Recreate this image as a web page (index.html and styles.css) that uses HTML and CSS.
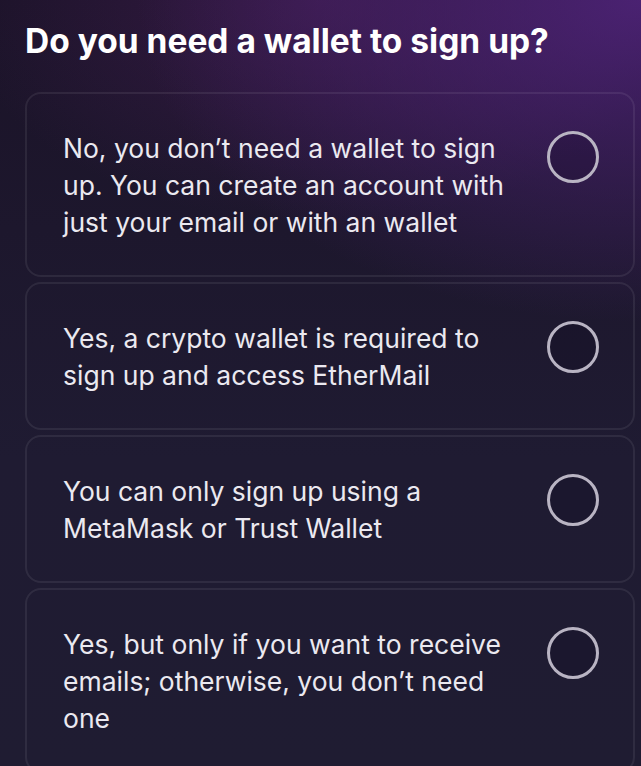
FILE: index.html
```html
<!DOCTYPE html>
<html lang="en">
<head>
<meta charset="utf-8">
<link rel="stylesheet" href="styles.css">
</head>
<body>
<main class="quiz">
  <h1 class="question">Do you need a wallet to sign up?</h1>
  <div class="options">
    <label class="option">
      <span class="option-text">No, you don’t need a wallet to sign up. You can create an account with just your email or with an wallet</span>
      <span class="radio"></span>
    </label>
    <label class="option">
      <span class="option-text">Yes, a crypto wallet is required to sign up and access EtherMail</span>
      <span class="radio"></span>
    </label>
    <label class="option">
      <span class="option-text">You can only sign up using a MetaMask or Trust Wallet</span>
      <span class="radio"></span>
    </label>
    <label class="option">
      <span class="option-text">Yes, but only if you want to receive emails; otherwise, you don’t need one</span>
      <span class="radio"></span>
    </label>
  </div>
</main>
</body>
</html>
```
FILE: styles.css
```css
html, body {
  margin: 0;
  padding: 0;
}
body {
  width: 641px;
  height: 766px;
  overflow: hidden;
  font-family: Inter, "Noto Sans", sans-serif;
  color: #ebe9f0;
  background:
    radial-gradient(ellipse 720px 460px at 100% 0%, rgba(82, 36, 126, 0.85), rgba(82, 36, 126, 0) 70%),
    radial-gradient(ellipse 520px 320px at 50% 0%, rgba(72, 30, 88, 0.6), rgba(72, 30, 88, 0) 70%),
    linear-gradient(180deg, #1b1328 0%, #1f1b32 60%, #1f1c32 100%);
}
.quiz {
  padding: 20px 6px 0 25px;
}
.question {
  margin: 0;
  font-size: 33.5px;
  line-height: 43px;
  font-weight: 700;
  color: #ffffff;
  letter-spacing: 0;
}
.options {
  margin-top: 29px;
  display: flex;
  flex-direction: column;
  gap: 5px;
}
.option {
  display: flex;
  align-items: flex-start;
  gap: 28px;
  padding: 36px 34px 34px 36px;
  border: 2px solid rgba(255, 255, 255, 0.075);
  border-radius: 16px;
}
.option-text {
  flex: 1;
  font-size: 26.5px;
  line-height: 37px;
  font-weight: 400;
}
.radio {
  flex: none;
  width: 46px;
  height: 46px;
  margin-top: 1px;
  border: 3px solid #b9b4c3;
  border-radius: 50%;
  background: rgba(10, 5, 25, 0.18);
}
```
